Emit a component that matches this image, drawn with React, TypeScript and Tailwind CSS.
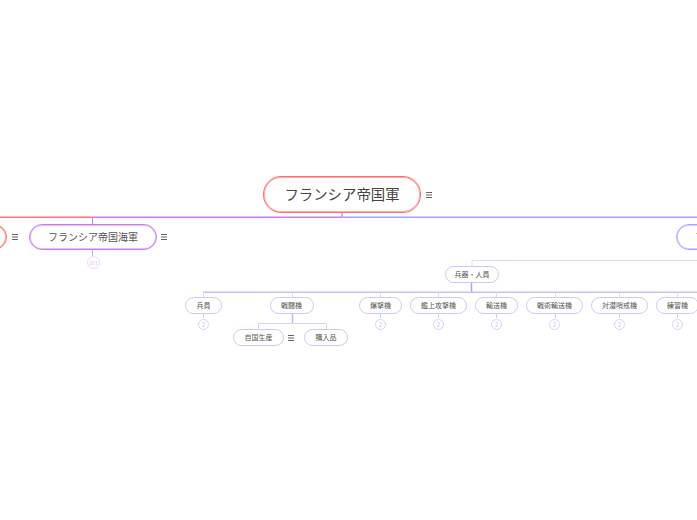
const font = "font-['Noto_Sans_CJK_JP','Noto_Sans',sans-serif]";

const lines: { d: string; c: string; w?: number }[] = [
  { d: "M0 217.3H92.5", c: "#ff7373", w: 1.5 },
  { d: "M92.5 217.3H342", c: "#c77fe8", w: 1.5 },
  { d: "M342 217.3H697", c: "#a9a3fb", w: 1.5 },
  { d: "M342 213V218", c: "#a9a3fb", w: 1.5 },
  { d: "M92.5 218V224", c: "#c77fe8", w: 1 },
  { d: "M92.5 249V257", c: "#d9a8f0", w: 1 },
  { d: "M472 266V260.5H697", c: "#dedbfd", w: 1 },
  { d: "M471.5 282V292", c: "#a9a3fb", w: 1.5 },
  { d: "M203 292.3H697", c: "#c4c0fc", w: 1.5 },
  { d: "M203.5 292V297M292.5 292V297M380.5 292V297M438.5 292V297M496.5 292V297M555.5 292V297M619.5 292V297M677.5 292V297", c: "#dcd9fd", w: 1 },
  { d: "M203.5 313V318M380.5 313V318M438.5 313V318M496.5 313V318M555.5 313V318M619.5 313V318M677.5 313V318", c: "#cfccfd", w: 1 },
  { d: "M292.5 313V323", c: "#bcb8fc", w: 1.5 },
  { d: "M258.5 329V323.5H326.5V329", c: "#d6d3fd", w: 1 },
];

function Menu() {
  return (
    <svg className="shrink-0" width="6" height="6" viewBox="0 0 6 6" fill="none" stroke="#666" strokeWidth="1">
      <path d="M0 .5H6M0 3H6M0 5.5H6" />
    </svg>
  );
}

function Badge({ text = "2" }: { text?: string }) {
  return (
    <div className="flex h-[11px] w-[11px] items-center justify-center rounded-full border border-[#d6d3fd] bg-white text-[6px] leading-none text-[#c9c5fb]">
      {text}
    </div>
  );
}

function Small({ className = "", text }: { className?: string; text: string }) {
  return (
    <div className={`flex h-[17px] shrink-0 items-center justify-center whitespace-nowrap rounded-[9px] border border-[#cbc8fc] bg-white text-[7px] leading-none text-[#555] ${className}`}>
      {text}
    </div>
  );
}

function Column({ className, text }: { className: string; text: string }) {
  return (
    <div className="flex shrink-0 flex-col items-center gap-[5px]">
      <Small className={className} text={text} />
      <Badge />
    </div>
  );
}

export default function App() {
  return (
    <div className={`relative h-[520px] w-[697px] overflow-hidden bg-white ${font}`}>
      <svg className="absolute inset-0" width="697" height="520" fill="none">
        {lines.map((l, i) => (
          <path key={i} d={l.d} stroke={l.c} strokeWidth={l.w ?? 1} />
        ))}
      </svg>

      {/* root */}
      <div className="absolute left-[263px] top-[176px] flex items-center gap-[5px]">
        <div className="flex h-[37px] w-[158px] items-center justify-center rounded-[18px] border border-[#ff6b6b] bg-white text-[14.4px] leading-none text-[#444] shadow-[inset_0_0_0_1px_rgba(255,107,107,0.55)]">
          フランシア帝国軍
        </div>
        <Menu />
      </div>

      {/* first level */}
      <div className="absolute left-[-60px] top-[224px] flex items-start">
        <div className="h-[26px] w-[67px] rounded-[13px] border border-[#ff6b6b] bg-white shadow-[inset_0_0_0_1px_rgba(255,107,107,0.55)]" />
        <div className="ml-[5px] mt-[10px]"><Menu /></div>
        <div className="ml-[11px] flex flex-col items-center">
          <div className="flex h-[26px] w-[128px] items-center justify-center rounded-[13px] border border-[#c77fe8] bg-white text-[10px] leading-none text-[#555] shadow-[inset_0_0_0_1px_rgba(199,127,232,0.5)]">
            フランシア帝国海軍
          </div>
          <div className="mt-[6px] flex h-[13px] w-[13px] items-center justify-center rounded-full border border-[#eed6f9] bg-white text-[5px] leading-none text-[#dcb5f2]">
            163
          </div>
        </div>
        <div className="ml-[4px] mt-[10px]"><Menu /></div>
      </div>

      <div className="absolute left-[676px] top-[224px] h-[26px] w-[128px] whitespace-nowrap rounded-[13px] border border-[#a9a3fb] bg-white pl-[18px] text-[10px] leading-[24px] text-[#555] shadow-[inset_0_0_0_1px_rgba(169,163,251,0.5)]">
        フランシア帝国空軍
      </div>

      <Small className="absolute left-[445px] top-[266px] w-[54px]" text="兵器・人員" />

      {/* second level row */}
      <div className="absolute left-[185px] top-[297px] flex items-start gap-[11px]">
        <Column className="w-[37px]" text="兵員" />
        <div className="flex w-[115px] shrink-0 flex-col items-center">
          <Small className="relative left-[1px] w-[44px]" text="戦闘機" />
          <div className="mt-[15px] flex w-full items-center">
            <Small className="w-[51px]" text="自国生産" />
            <div className="ml-[4px]"><Menu /></div>
            <Small className="ml-[10px] w-[44px]" text="購入品" />
          </div>
        </div>
        <div className="flex items-start gap-2">
          <Column className="w-[43px]" text="爆撃機" />
          <Column className="w-[57px]" text="艦上攻撃機" />
          <Column className="w-[43px]" text="輸送機" />
          <Column className="w-[57px]" text="戦術輸送機" />
          <Column className="w-[57px]" text="対潜哨戒機" />
          <Column className="w-[43px]" text="練習機" />
        </div>
      </div>
    </div>
  );
}
